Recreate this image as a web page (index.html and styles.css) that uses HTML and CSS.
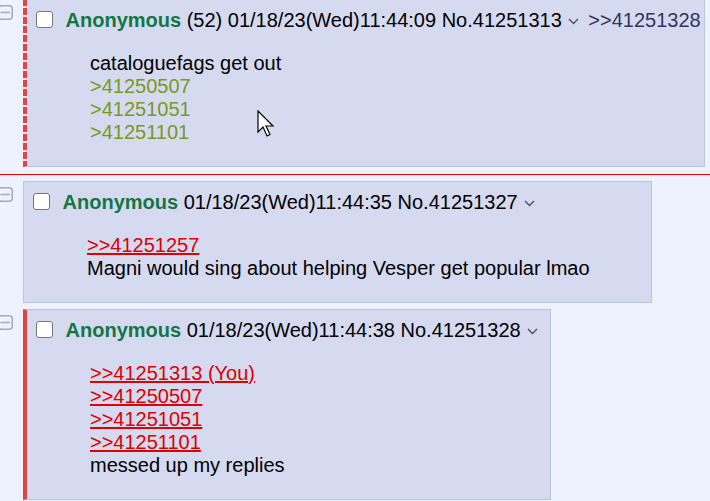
FILE: index.html
```html
<!DOCTYPE html>
<html>
<head>
<meta charset="utf-8">
<link rel="stylesheet" href="styles.css">
</head>
<body>
<div class="thread">
  <div class="reply-row">
    <div class="side"><svg class="hide" width="15" height="15" viewBox="0 0 15 15"><rect x="0.75" y="0.75" width="13.5" height="13.5" rx="3" fill="none" stroke="#a6aabb" stroke-width="1.5"/><line x1="2.5" y1="7.5" x2="12" y2="7.5" stroke="#a6aabb" stroke-width="1.5"/></svg></div>
    <div class="post dashed">
      <div class="post-info"><input type="checkbox" class="cb"> <span class="name">Anonymous</span> (52) 01/18/23(Wed)11:44:09 <span class="num">No.41251313</span> <span class="menu"><svg width="11" height="7" viewBox="0 0 11 7"><polyline points="1,1 5.5,5.5 10,1" fill="none" stroke="#4d4d66" stroke-width="1.4"/></svg></span><a class="backlink">&gt;&gt;41251328</a></div>
      <blockquote class="msg">cataloguefags get out<br><span class="green">&gt;41250507</span><br><span class="green">&gt;41251051</span><br><span class="green">&gt;41251101</span></blockquote>
    </div>
  </div>
  <div class="unread"></div>
  <div class="reply-row">
    <div class="side"><svg class="hide" width="15" height="15" viewBox="0 0 15 15"><rect x="0.75" y="0.75" width="13.5" height="13.5" rx="3" fill="none" stroke="#a6aabb" stroke-width="1.5"/><line x1="2.5" y1="7.5" x2="12" y2="7.5" stroke="#a6aabb" stroke-width="1.5"/></svg></div>
    <div class="post plain">
      <div class="post-info"><input type="checkbox" class="cb"> <span class="name">Anonymous</span> 01/18/23(Wed)11:44:35 <span class="num">No.41251327</span> <span class="menu"><svg width="11" height="7" viewBox="0 0 11 7"><polyline points="1,1 5.5,5.5 10,1" fill="none" stroke="#4d4d66" stroke-width="1.4"/></svg></span></div>
      <blockquote class="msg"><a class="quotelink">&gt;&gt;41251257</a><br>Magni would sing about helping Vesper get popular lmao</blockquote>
    </div>
  </div>
  <div class="reply-row gap">
    <div class="side"><svg class="hide" width="15" height="15" viewBox="0 0 15 15"><rect x="0.75" y="0.75" width="13.5" height="13.5" rx="3" fill="none" stroke="#a6aabb" stroke-width="1.5"/><line x1="2.5" y1="7.5" x2="12" y2="7.5" stroke="#a6aabb" stroke-width="1.5"/></svg></div>
    <div class="post mine">
      <div class="post-info"><input type="checkbox" class="cb"> <span class="name">Anonymous</span> 01/18/23(Wed)11:44:38 <span class="num">No.41251328</span> <span class="menu"><svg width="11" height="7" viewBox="0 0 11 7"><polyline points="1,1 5.5,5.5 10,1" fill="none" stroke="#4d4d66" stroke-width="1.4"/></svg></span></div>
      <blockquote class="msg"><a class="quotelink">&gt;&gt;41251313 (You)</a><br><a class="quotelink">&gt;&gt;41250507</a><br><a class="quotelink">&gt;&gt;41251051</a><br><a class="quotelink">&gt;&gt;41251101</a><br>messed up my replies</blockquote>
    </div>
  </div>
</div>
<svg class="cursor" width="20" height="30" viewBox="0 0 20 30"><path d="M1,1 L1,22 L6,17 L10,26 L13,24.5 L9,16 L16,16 Z" fill="#fff" stroke="#000" stroke-width="1.2" stroke-linejoin="miter"/></svg>
</body>
</html>
```
FILE: styles.css
```css
html, body {
  margin: 0;
  padding: 0;
}
body {
  background: #eef2ff;
  color: #000;
  font-family: "Liberation Sans", Arial, sans-serif;
  font-size: 20px;
  line-height: 23px;
  overflow: hidden;
  height: 501px;
}
.thread {
  margin-top: -1px;
}
.reply-row {
  display: flex;
  align-items: flex-start;
}
.reply-row.gap {
  margin-top: 6px;
}
.side {
  width: 23px;
  flex: none;
}
.hide {
  display: block;
  margin: 6px 0 0 -2px;
}
.post {
  background: #d6daf0;
  border: 1px solid #b7c5d9;
  padding: 3px;
  flex: none;
}
.post.dashed {
  border-left: 4px solid transparent;
  background-image: repeating-linear-gradient(to bottom, #e14444 0px, #e14444 7px, #ece0ea 7px, #ece0ea 9px);
  background-size: 4px 100%;
  background-repeat: no-repeat;
  background-origin: border-box;
  background-clip: border-box;
}
.post.mine {
  border-left: 4px solid #e14444;
}
.post-info {
  padding-top: 6px;
  white-space: nowrap;
}
.cb {
  appearance: none;
  -webkit-appearance: none;
  width: 17px;
  height: 17px;
  margin: 0 7px 0 6px;
  border: 1.5px solid #767676;
  border-radius: 3px;
  background: #fff;
  vertical-align: -1px;
  box-sizing: border-box;
}
.name {
  color: #117743;
  font-weight: bold;
}
.menu {
  display: inline-block;
  width: 11px;
  height: 7px;
  margin: 0 9px 0 1px;
  vertical-align: middle;
}
.menu svg {
  display: block;
}
.backlink {
  color: #34345c;
  text-decoration: none;
}
.msg {
  margin: 20px 58px 19px 60px;
}
.green {
  color: #789922;
}
.quotelink {
  color: #dd0000;
  text-decoration: underline;
}
.unread {
  height: 1px;
  background: #ee0000;
  margin: 7px 0 6px;
}
.cursor {
  position: absolute;
  left: 257px;
  top: 110px;
}
```
